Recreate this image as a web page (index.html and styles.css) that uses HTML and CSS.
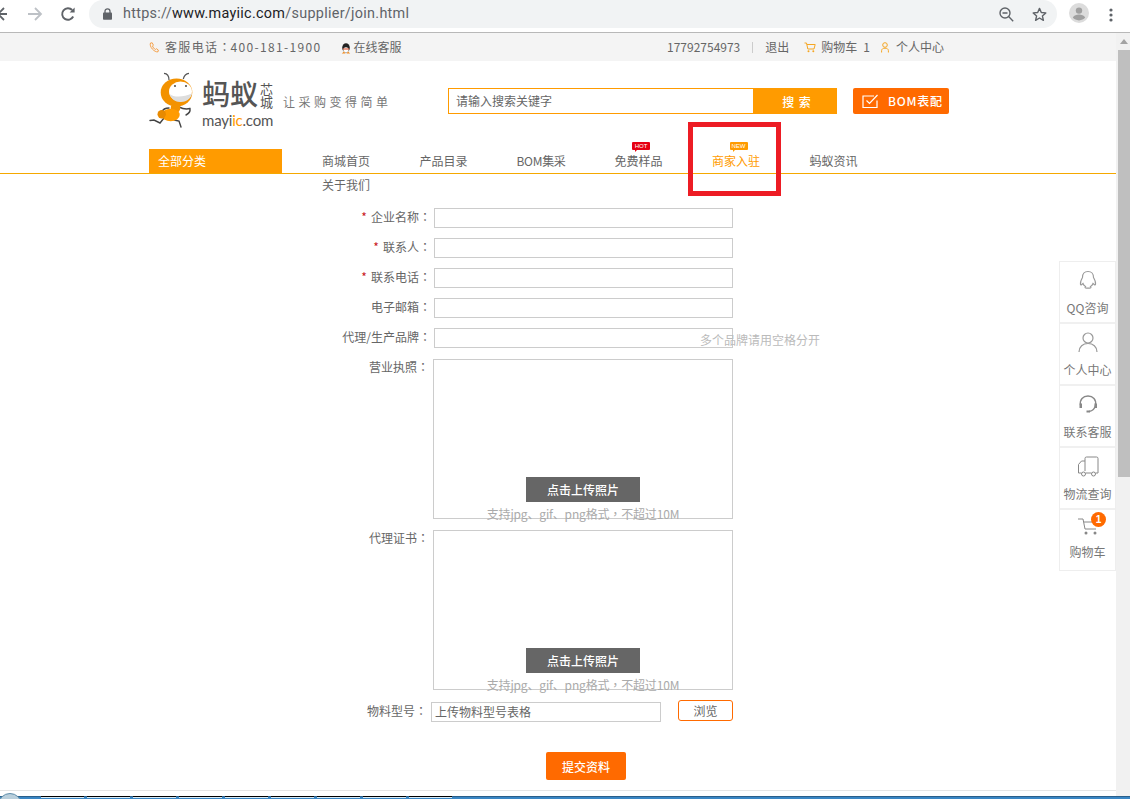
FILE: index.html
```html
<!DOCTYPE html>
<html lang="zh-CN">
<head>
<meta charset="utf-8">
<title>商家入驻</title>
<link rel="stylesheet" href="styles.css">
</head>
<body>
<div class="chrome">
  <div class="nav-btns">
    <svg class="ic-back" width="12" height="16" viewBox="0 0 12 16"><path d="M9 2 3 8l6 6M3 8h9" fill="none" stroke="#5f6368" stroke-width="1.8" transform="translate(-5 0)"/></svg>
    <svg class="ic-fwd" width="16" height="16" viewBox="0 0 16 16"><path d="M1 8h13M8 2l6 6-6 6" fill="none" stroke="#bdc1c6" stroke-width="1.8"/></svg>
    <svg class="ic-reload" width="16" height="16" viewBox="0 0 16 16"><path d="M13.2 10.5A5.8 5.8 0 1 1 12.2 4" fill="none" stroke="#5f6368" stroke-width="1.9"/><path d="M9.6 6.6h5V1.6z" fill="#5f6368"/></svg>
  </div>
  <div class="omnibox">
    <svg class="ic-lock" width="9" height="12" viewBox="0 0 9 12"><path d="M2 5V3.3a2.5 2.5 0 0 1 5 0V5" fill="none" stroke="#5f6368" stroke-width="1.3"/><rect y="4.6" width="9" height="7.2" rx=".8" fill="#5f6368"/></svg>
    <span class="url">https://<b>www.mayiic.com</b>/supplier/join.html</span>
    <svg class="ic-zoom" width="15" height="15" viewBox="0 0 15 15"><circle cx="6" cy="6" r="5" fill="none" stroke="#5f6368" stroke-width="1.4"/><path d="M3.5 6h5M9.6 9.6l4.6 4.6" fill="none" stroke="#5f6368" stroke-width="1.4"/></svg>
    <svg class="ic-star" width="15" height="15" viewBox="0 0 15 15"><path d="m7.5 1.4 1.8 4.1 4.5.4-3.4 3 1 4.4-3.9-2.3-3.9 2.3 1-4.4-3.4-3 4.5-.4z" fill="none" stroke="#5f6368" stroke-width="1.4" stroke-linejoin="round"/></svg>
  </div>
  <svg class="ic-avatar" width="20" height="20" viewBox="0 0 20 20"><circle cx="10" cy="10" r="10" fill="#dcdcdc"/><circle cx="10" cy="7.6" r="3.2" fill="#a0a0a0"/><path d="M3.8 14.6c1.4-2.2 3.6-3 6.2-3s4.800.8 6.200 3c-1.400 1.800-3.600 2.800-6.200 2.800s-4.800-1-6.200-2.800z" fill="#a0a0a0"/></svg>
  <svg class="ic-menu" width="4" height="14" viewBox="0 0 4 14"><circle cx="2" cy="2" r="1.600" fill="#5f6368"/><circle cx="2" cy="7" r="1.600" fill="#5f6368"/><circle cx="2" cy="12" r="1.600" fill="#5f6368"/></svg>
</div>

<div class="viewport">
  <main class="page">
    <div class="topbar">
      <div class="top-left">
        <svg class="ic-phone" width="10" height="11" viewBox="0 0 10 11"><path d="M1.500 1C.8 2.500 1.500 5 3.300 7s4 3.200 5.700 2.800L9.300 8 7.400 6.700l-1 .8C5.300 7 3.800 5.300 3.500 4l.9-.9L3.200.8z" fill="none" stroke="#f5a149" stroke-width="1"/></svg>
        <span class="hotline">客服电话<span class="tc" lang="zh-Hant">：</span>400-181-1900</span>
        <svg class="ic-qq" width="10" height="11" viewBox="0 0 10 11"><ellipse cx="5" cy="4.800" rx="3.800" ry="4.600" fill="#222"/><ellipse cx="5" cy="6.800" rx="2.700" ry="2.500" fill="#fff"/><path d="M3 8.400 .8 10.500h3.700zM7 8.400l2.200 2.100H5.500z" fill="#f08a1c"/><path d="M1.600 5.400h6.800l-.6 1.100H2.200z" fill="#d9401a"/></svg>
        <span>在线客服</span>
      </div>
      <div class="top-right">
        <span>17792754973</span>
        <i class="sep"></i>
        <span>退出</span>
        <svg class="ic-cart-s" width="12" height="11" viewBox="0 0 12 11"><path d="M.5 1h2l1.300 6h6.200L11.200 2.500H3" fill="none" stroke="#f5a623" stroke-width="1"/><circle cx="4.500" cy="9.300" r="1" fill="#f5a623"/><circle cx="9.300" cy="9.300" r="1" fill="#f5a623"/></svg>
        <span class="cart-label">购物车</span>
        <span class="cart-num">1</span>
        <svg class="ic-user-s" width="8" height="11" viewBox="0 0 8 11"><circle cx="4" cy="3" r="2.300" fill="none" stroke="#f5a623"/><path d="M.6 10.500V8.600C.6 7 2 6.200 4 6.200s3.400.8 3.400 2.400v1.900" fill="none" stroke="#f5a623"/></svg>
        <span>个人中心</span>
      </div>
    </div>

    <header class="header">
      <div class="logo">
        <svg class="ant" width="52" height="56" viewBox="0 0 52 56">
          <path d="M20 8C20 4 18 1.500 15 1.300M34.300 7C35 4 37 1.500 40 1.300" fill="none" stroke="#555" stroke-width="1.200"/>
          <ellipse cx="27.500" cy="20.500" rx="15.800" ry="14" fill="#f39200"/>
          <ellipse cx="31.500" cy="19.500" rx="11.500" ry="10" fill="#fff"/>
          <path d="M20.500 22c4 3.500 14 3.500 22.500-.5-1 5-6 8.500-11.500 8.500s-9-3-11-8z" fill="#ddd"/>
          <circle cx="26" cy="14" r=".9" fill="#333"/><circle cx="37" cy="14" r=".9" fill="#333"/>
          <path d="M30 35c4 2 7 2.500 11 1.500.5 3-1 5-4 6.500M20 36c-3 0-6 1-7 4M25 48l5 1 2 6M15 46l-4 5-6-3-4 .5" fill="none" stroke="#444" stroke-width="1.400" stroke-linecap="round"/>
          <circle cx="26.500" cy="36" r="4.800" fill="#f39200"/>
          <ellipse cx="21.700" cy="43" rx="9" ry="6.200" fill="#ff9b00"/>
          <circle cx="12.700" cy="42.300" r="4.200" fill="#e88a00"/>
        </svg>
        <div class="logo-text">
          <div class="logo-top"><span class="logo-cn">蚂蚁</span><span class="logo-sub">芯城</span></div>
          <div class="logo-en">mayi<em>ic</em>.com</div>
        </div>
      </div>
      <div class="slogan">让采购变得简单</div>
      <form class="search">
        <div class="search-input">请输入搜索关键字</div>
        <div class="search-btn">搜 索</div>
      </form>
      <div class="bom-btn">
        <svg width="17" height="15" viewBox="0 0 17 15"><path d="M15 6.500V13.500H1V2h11" fill="none" stroke="#fff" stroke-width="1.200"/><path d="m4.500 6.500 3 3L15.500 1" fill="none" stroke="#fff" stroke-width="1.200"/></svg>
        <span>BOM表配</span>
      </div>
    </header>

    <nav class="navbar">
      <div class="all-cat">全部分类</div>
      <ul class="menu">
        <li>商城首页</li>
        <li>产品目录</li>
        <li class="latin-item">BOM集采</li>
        <li class="badged">免费样品<span class="badge hot">HOT</span></li>
        <li class="badged active">商家入驻<span class="badge new">NEW</span></li>
        <li>蚂蚁资讯</li>
        <li>关于我们</li>
      </ul>
    </nav>

    <form class="join">
      <div class="row"><label class="lbl"><i>*</i>企业名称<span class="tc" lang="zh-Hant">：</span></label><div class="field"></div></div>
      <div class="row"><label class="lbl"><i>*</i>联系人<span class="tc" lang="zh-Hant">：</span></label><div class="field"></div></div>
      <div class="row"><label class="lbl"><i>*</i>联系电话<span class="tc" lang="zh-Hant">：</span></label><div class="field"></div></div>
      <div class="row"><label class="lbl">电子邮箱<span class="tc" lang="zh-Hant">：</span></label><div class="field"></div></div>
      <div class="row"><label class="lbl">代理/生产品牌<span class="tc" lang="zh-Hant">：</span></label><div class="field"></div><span class="hint">多个品牌请用空格分开</span></div>
      <div class="row up-row"><label class="lbl">营业执照<span class="tc" lang="zh-Hant">：</span></label>
        <div class="upload"><div class="up-btn">点击上传照片</div><p class="up-tip">支持jpg、gif、png格式<span class="tc" lang="zh-Hant">，</span>不超过10M</p></div>
      </div>
      <div class="row up-row"><label class="lbl">代理证书<span class="tc" lang="zh-Hant">：</span></label>
        <div class="upload"><div class="up-btn">点击上传照片</div><p class="up-tip">支持jpg、gif、png格式<span class="tc" lang="zh-Hant">，</span>不超过10M</p></div>
      </div>
      <div class="row file-row"><label class="lbl">物料型号<span class="tc" lang="zh-Hant">：</span></label><div class="file-field">上传物料型号表格</div><div class="browse">浏览</div></div>
      <div class="submit-wrap"><div class="submit">提交资料</div></div>
    </form>
    <div class="page-end"></div>

    <aside class="side">
      <div class="side-item"><svg width="22" height="22" viewBox="0 0 22 22"><path d="M11 2.500C7.500 2.500 5.500 5 5.500 8.500 4 11 3 13 3.500 15.500c.5 1 1.500 0 2.500-1 .5 1.500 1.500 2.500 2.500 3-1 1-.5 2 2.500 1.500 3 .5 3.500-.5 2.500-1.500 1-.5 2-1.500 2.500-3 1 1 2 2 2.500 1 .5-2.500-.5-4.500-2-7C16.500 5 14.500 2.500 11 2.500z" fill="none" stroke="#999" stroke-width="1.100"/></svg><span>QQ咨询</span></div>
      <div class="side-item"><svg width="22" height="22" viewBox="0 0 22 22"><circle cx="11" cy="7" r="5" fill="none" stroke="#999" stroke-width="1.200"/><path d="M2 21c0-5.500 4-8.500 9-8.500s9 3 9 8.500" fill="none" stroke="#999" stroke-width="1.200"/></svg><span>个人中心</span></div>
      <div class="side-item"><svg width="22" height="22" viewBox="0 0 22 22"><path d="M3.500 12C2.500 6.500 6 3 11 3s8.500 3.500 7.500 9M18.500 12c-.5 3-3 6-6.500 6.500" fill="none" stroke="#888" stroke-width="1.400"/><path d="M2.500 10.500h2.500V15H2.500zM17.500 10.500H20V15h-2.500zM9.500 17.500H13v2H9.500z" fill="#888"/></svg><span>联系客服</span></div>
      <div class="side-item"><svg width="22" height="22" viewBox="0 0 22 22"><path d="M8 16V3.500A1.500 1.500 0 0 1 9.500 2h10A1.500 1.500 0 0 1 21 3.500V18h-2.500M14.500 18h-6M8 6H4.500L1.500 9.500V18H4.500" fill="none" stroke="#888" stroke-width="1"/><circle cx="6.500" cy="19" r="2" fill="none" stroke="#888"/><circle cx="16.500" cy="19" r="2" fill="none" stroke="#888"/></svg><span>物流查询</span></div>
      <div class="side-item side-cart"><svg width="22" height="22" viewBox="0 0 22 22"><path d="M1 4h5l2 10h11M7 7h14l-1 4" fill="none" stroke="#888" stroke-width="1"/><circle cx="9" cy="18" r="1.500" fill="#888"/><circle cx="18" cy="18" r="1.500" fill="#888"/></svg><span>购物车</span><b class="side-badge">1</b></div>
    </aside>

    <div class="red-box"></div>
  </main>
  <div class="scrollbar">
    <div class="sb-arrow"></div>
    <div class="sb-thumb"></div>
  </div>
</div>

<div class="taskbar">
  <div class="orb"></div>
  <div class="tasks"><i></i><i></i><i></i><i></i><i></i><i></i><i></i><i></i><i></i></div>
</div>
</body>
</html>
```

FILE: styles.css
```css
* { box-sizing: border-box; }
html, body { margin: 0; height: 100%; }
body {
  width: 1130px; height: 799px; overflow: hidden;
  display: flex; flex-direction: column;
  font: 12px/18px "Noto Sans CJK SC", "Liberation Sans", sans-serif;
  color: #666; background: #fff;
}
ul { list-style: none; margin: 0; padding: 0; }
p { margin: 0; }
i, em { font-style: normal; }
.tc { font-family: "Noto Sans CJK TC", "Noto Sans CJK SC", sans-serif; }

/* browser chrome */
.chrome {
  height: 33px; flex: none; display: flex; align-items: flex-start;
  border-bottom: 1px solid #b8b8b8; background: #fff;
}
.nav-btns { width: 89px; height: 28px; display: flex; align-items: center; }
.ic-back { margin-left: 0; }
.ic-fwd { margin-left: 15px; }
.ic-reload { margin-left: 17px; }
.omnibox {
  width: 968px; height: 28px; display: flex; align-items: center;
  background: #f1f3f4; border-radius: 0 14px 14px 0 / 14px;
  border-top-left-radius: 14px; border-bottom-left-radius: 14px;
  padding-left: 14px;
}
.url {
  font: 14.4px/28px Roboto, "Liberation Sans", sans-serif; color: #5f6368;
  margin-left: 11px; flex: 1; letter-spacing: .29px;
}
.url b { font-weight: 400; color: #202124; }
.ic-zoom { margin-right: 18px; }
.ic-star { margin-right: 10px; }
.ic-avatar { margin: 3px 0 0 12px; }
.ic-menu { margin: 8px 0 0 20px; }

.viewport { flex: 1; display: flex; min-height: 0; }
.page { flex: 1; min-width: 0; position: relative; display: flex; flex-direction: column; }

/* top strip */
.topbar {
  height: 28px; flex: none; background: #f4f4f4;
  padding: 0 172px 0 149px;
  display: flex; justify-content: space-between; align-items: center;
}
.top-left, .top-right { display: flex; align-items: center; }
.hotline { margin-left: 6px; letter-spacing: 1.350px; white-space: nowrap; }
.hotline .tc { letter-spacing: 0; }
.ic-qq { margin: 2px 3px 0 19px; }
.sep { width: 1px; height: 11px; background: #ccc; margin: 0 12px; }
.ic-cart-s { margin: 0 5px 0 15px; }
.cart-num { margin-left: 6px; }
.ic-user-s { margin: 0 7px 0 11px; }

/* logo row */
.header { height: 88px; flex: none; display: flex; padding-left: 149px; }
.logo { display: flex; width: 124px; height: 56px; margin-top: 11px; }
.ant { flex: none; }
.logo-text { margin-left: 1px; width: 72px; }
.logo-top { display: flex; height: 41px; color: #555; }
.logo-cn {
  flex: none; width: 58px; height: 38px; margin-top: 5px;
  font: 500 28px/38px "Liberation Sans", "Noto Sans CJK SC", sans-serif; white-space: nowrap;
}
.logo-sub { flex: none; width: 13px; height: 28px; margin-top: 11px; font-size: 13px; line-height: 13px; writing-mode: vertical-rl; white-space: nowrap; }
.logo-en { font: 15px/15px Lato, "Liberation Sans", sans-serif; color: #555; white-space: nowrap; letter-spacing: -.2px; }
.logo-en em { color: #ff9b00; }
.slogan { width: 107px; margin: 32px 0 0 10px; letter-spacing: 3.500px; color: #777; white-space: nowrap; }
.search { display: flex; width: 389px; height: 26px; margin: 27px 0 0 58px; }
.search-input {
  width: 305px; border: 1px solid #ff9b00; border-right: 0;
  padding-left: 7px; line-height: 23px; color: #666;
}
.search-btn { width: 84px; background: #ff9b00; color: #fff; text-align: center; line-height: 27px; font-weight: 500; letter-spacing: 1px; padding-left: 4px; }
.bom-btn {
  width: 96px; height: 26px; margin: 27px 0 0 16px; background: #ff6a00; border-radius: 2px;
  color: #fff; display: flex; align-items: center; padding-left: 9px; gap: 9px; letter-spacing: .75px; white-space: nowrap; font-weight: 500;
}

/* nav */
.navbar {
  height: 25px; flex: none; display: flex; padding-left: 149px;
  border-bottom: 1px solid #f5a800;
}
.all-cat { width: 133px; height: 24px; background: #ff9b00; color: #fff; line-height: 24px; padding-left: 9px; }
.menu {
  display: grid; grid-template-columns: repeat(6, 97.500px); grid-auto-rows: 24px;
  margin-left: 40px; height: 48px;
}
.menu li { line-height: 24px; position: relative; white-space: nowrap; }
.menu .latin-item { letter-spacing: -.3px; margin-left: -.5px; }
.menu .active { color: #ff9b00; }
.badge {
  position: absolute; left: 17.500px; top: -7.500px; width: 18px; height: 8px;
  border-radius: 1px; color: #fff; font: 6px/8px "Liberation Sans", sans-serif; text-align: center;
}
.badge::after {
  content: ""; position: absolute; left: 3px; top: 8px;
  border: 1.500px solid transparent; border-top-color: inherit; border-left-color: inherit;
}
.hot { background: #e60012; border-color: #e60012; }
.new { background: #ff9b00; border-color: #ff9b00; }

/* form */
.join { margin-top: 34px; padding-left: 334px; flex: none; }
.row { display: flex; height: 20px; margin-bottom: 10px; }
.lbl { width: 97px; text-align: right; white-space: nowrap; flex: none; line-height: 17px; }
.lbl i { color: #c8161d; margin-right: 4px; }
.field { width: 299px; height: 20px; margin-left: 3px; border: 1px solid #ccc; }
.hint { margin: 3px 0 0 -33px; color: #bbb; white-space: nowrap; position: relative; }
.up-row { height: 160px; margin-top: 11px; margin-bottom: 0; }
.up-row .lbl { width: 95px; margin-top: -1px; }
.up-row + .file-row { margin-top: 12px; }
.upload {
  width: 300px; height: 160px; margin-left: 4px; border: 1px solid #ccc;
  display: flex; flex-direction: column; align-items: center; justify-content: flex-end;
}
.up-btn { width: 114px; height: 25px; background: #666; color: #fff; text-align: center; line-height: 25px; font-weight: 500; }
.up-tip { height: 16px; margin-top: 3px; margin-bottom: -3px; color: #aaa; line-height: 18px; white-space: nowrap; letter-spacing: -.16px; }
.file-row .lbl { width: 93px; margin-top: 0; }
.file-field { width: 230px; height: 20px; margin-left: 4px; border: 1px solid #ccc; padding-left: 3px; line-height: 18px; }
.browse {
  width: 55px; height: 21px; margin: -2px 0 0 17px; border: 1px solid #ff6a00; border-radius: 3px;
  text-align: center; line-height: 19px;
}
.submit-wrap { padding-left: 212px; margin-top: 30px; }
.submit { width: 80px; height: 28px; background: #ff6a00; color: #fff; border-radius: 2px; text-align: center; line-height: 29px; font-weight: 500; }
.page-end { margin-top: auto; height: 6px; border-top: 1px solid #e5e5e5; flex: none; }

/* floating rail */
.side {
  position: absolute; left: 1059px; top: 228px; width: 57px;
  border: 1px solid #eee; background: #fff;
}
.side-item {
  height: 62px; display: flex; flex-direction: column; align-items: center; padding-top: 7px;
  border-bottom: 2px solid #f0f0f0; position: relative; white-space: nowrap;
}
.side-item:last-child { border-bottom: 0; height: 60px; }
.side-item svg { height: 22px; flex: none; }
.side-item span { margin-top: 8px; color: #777; }
.side-cart { padding-top: 5px; }
.side-cart span { margin-top: 6px; }
.side-badge {
  position: absolute; left: 31px; top: 2px; width: 15px; height: 15px; border-radius: 50%;
  background: #ff6a00; color: #fff; font: 700 10px/15px "Liberation Sans", sans-serif; text-align: center;
}

.red-box {
  position: absolute; left: 688px; top: 89px; width: 93px; height: 74px;
  border: 5px solid #ed1c24;
}

/* page scrollbar */
.scrollbar { width: 14px; flex: none; background: #f1f1f1; position: relative; }
.sb-arrow {
  width: 0; height: 0; margin: 6px auto 0; transform: translateX(1px);
  border: 4px solid transparent; border-top: 0; border-bottom: 5px solid #a3a3a3;
}
.sb-thumb { margin: 6px 0 0 2px; height: 427px; background: #bfbfbf; }

/* os taskbar */
.taskbar {
  height: 3px; flex: none; position: relative; background: #3a86c4; border-top: 1px solid #2a5f8a;
}
.orb { position: absolute; left: -2px; top: -4px; width: 24px; height: 24px; border-radius: 50%; background: #b9cfdc; border: 1px solid #5f8eab; }
.tasks { display: flex; gap: 3px; padding-left: 41px; }
.tasks i { width: 43px; height: 2px; background: #d6ebf7; border-top: 1px solid #000; margin-top: -1px; }
```
